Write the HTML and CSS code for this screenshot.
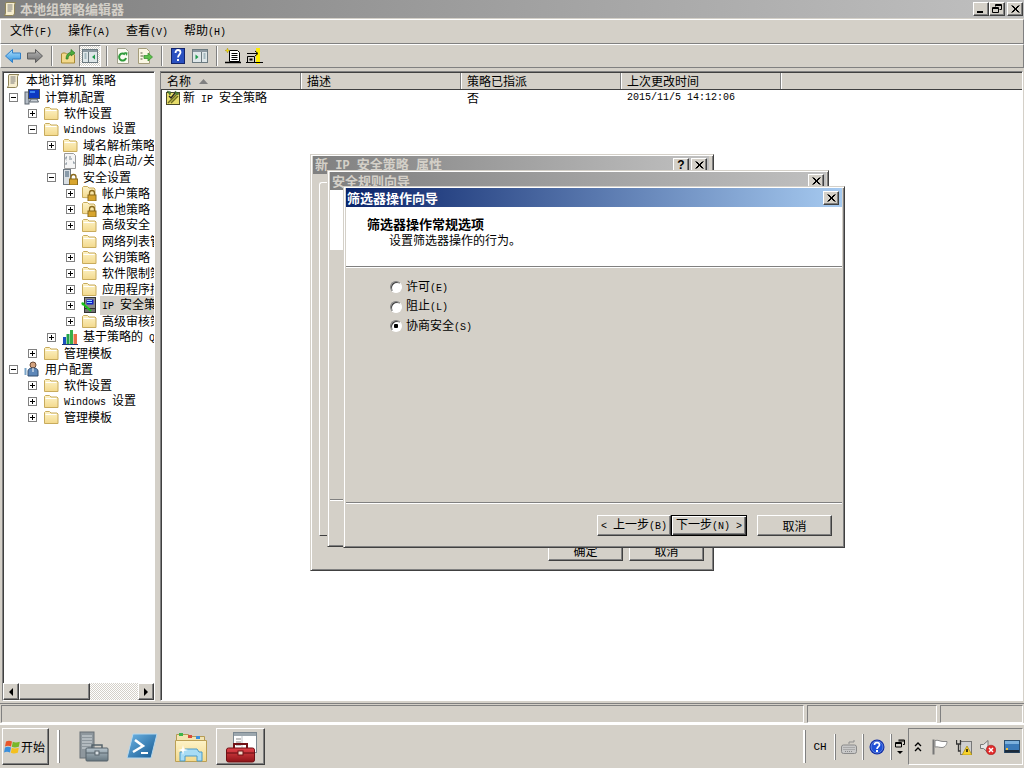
FILE: index.html
```html
<!DOCTYPE html>
<html lang="zh-CN">
<head>
<meta charset="utf-8">
<title>本地组策略编辑器</title>
<link rel="stylesheet" href="styles.css">
</head>
<body>
<svg class="defs" xmlns="http://www.w3.org/2000/svg">
  <defs>
    <linearGradient id="gBlue" x1="0" y1="0" x2="0" y2="1"><stop offset="0" stop-color="#b5e2fb"/><stop offset="1" stop-color="#2a90e0"/></linearGradient>
    <linearGradient id="gGray" x1="0" y1="0" x2="0" y2="1"><stop offset="0" stop-color="#b8b8b8"/><stop offset="1" stop-color="#6e6e6e"/></linearGradient>
    <linearGradient id="gFold" x1="0" y1="0" x2="0" y2="1"><stop offset="0" stop-color="#fdf3c8"/><stop offset="1" stop-color="#f3d98c"/></linearGradient>
    <linearGradient id="gPs" x1="0" y1="0" x2="1" y2="1"><stop offset="0" stop-color="#6fb6e6"/><stop offset="1" stop-color="#14578f"/></linearGradient>
    <linearGradient id="gRed" x1="0" y1="0" x2="0" y2="1"><stop offset="0" stop-color="#e2434a"/><stop offset="1" stop-color="#8e1418"/></linearGradient>
    <linearGradient id="gSteel" x1="0" y1="0" x2="0" y2="1"><stop offset="0" stop-color="#b7c4cc"/><stop offset="1" stop-color="#66767f"/></linearGradient>
    <symbol id="folder" viewBox="0 0 16 16"><path d="M1.5 14.5V3.5l1-1h4l1.500 1.500h6l1 1v9.500z" fill="url(#gFold)" stroke="#c8ab5c"/><path d="M2.500 5.500h11" stroke="#fff" fill="none"/></symbol>
    <symbol id="lockfolder" viewBox="0 0 16 16"><path d="M1.500 12.500V2.500l1-1h4l1.500 1.500h5l1 1v9z" fill="url(#gFold)" stroke="#c8ab5c"/><path d="M8.500 10V8a2.500 2.500 0 0 1 5 0v2" fill="none" stroke="#8a6a1d" stroke-width="1.300"/><rect x="7" y="10" width="8" height="6" fill="#d8a52e" stroke="#8a6a1d"/></symbol>
    <symbol id="lock-server" viewBox="0 0 16 16"><rect x="1.500" y="0.500" width="7" height="15" fill="#d9dfe4" stroke="#6d7780"/><path d="M3 3h4M3 5h4M3 7h4" stroke="#39566e"/><path d="M9 10V8a2.500 2.500 0 0 1 5 0v2" fill="none" stroke="#8a6a1d" stroke-width="1.300"/><rect x="7.500" y="10" width="8" height="6" fill="#d8a52e" stroke="#8a6a1d"/></symbol>
    <symbol id="script" viewBox="0 0 16 16"><path d="M2.500.5h9l2 2v13h-11z" fill="#f5f5f5" stroke="#9a9a9a"/><path d="M5 4H4v2H3.500M4.500 7H4M7 4h2M7 6h3M5 10H4v2M11 9h1v2" stroke="#7b8894" fill="none"/></symbol>
    <symbol id="scroll" viewBox="0 0 16 16"><path d="M4 1.500h10c-1 .5-1.500 1.500-1.500 2.500v8c0 1.500-1 2.500-2 2.500H2c1-.5 1.500-1.500 1.500-2.500V3z" fill="#f6edcf" stroke="#8f8459"/><path d="M5.500 4h5M5.500 6h5M5.500 8h5M5.500 10h4" stroke="#7d7d7d"/></symbol>
    <symbol id="computer" viewBox="0 0 16 16"><rect x="1" y="3" width="4" height="12" fill="#b5bdc6" stroke="#5d6670"/><rect x="4.500" y="0.500" width="11" height="9" fill="#0d39c2" stroke="#4a5058"/><path d="M6 2h5v2H6z" fill="#3f86f0"/><path d="M7 10h6l1.500 3h-9z" fill="#c8ced4" stroke="#5d6670"/></symbol>
    <symbol id="user" viewBox="0 0 16 16"><circle cx="9" cy="4" r="3" fill="#d3a27e" stroke="#6a4a34"/><path d="M4 15V10c0-2 2-3 5-3s5 1 5 3v5z" fill="#5d87b8" stroke="#334e70"/><path d="M1.500 7v7" stroke="#7ba5c8" stroke-width="2"/><path d="M9 7v4" stroke="#fff"/></symbol>
    <symbol id="ipsec" viewBox="0 0 16 16"><rect x="3.500" y="0.500" width="11" height="11" fill="#8a8a8a" stroke="#333"/><rect x="5.500" y="2.500" width="7" height="5" fill="#1020c8"/><path d="M6 3.500h5M6 5.500h5" stroke="#8fd0ff"/><rect x="3.500" y="11.500" width="11" height="4" fill="#707070" stroke="#333"/><path d="M1 6l9 8" stroke="#18c418" stroke-width="2"/><path d="M0.500 5.500l3.500.2-3 3z" fill="#18c418"/></symbol>
    <symbol id="qos" viewBox="0 0 16 16"><rect x="1" y="8" width="3" height="7" fill="#1c4fc0"/><rect x="4.500" y="5" width="3" height="10" fill="#22a34a"/><rect x="8" y="1" width="3" height="14" fill="#36b04a"/><rect x="11.500" y="5" width="3.500" height="10" fill="#e87148"/><path d="M0 15.500h16" stroke="#1e3a7a"/></symbol>
    <symbol id="policy" viewBox="0 0 16 16"><rect x="1.500" y="2.500" width="13" height="12" fill="#e7dd6b" stroke="#4a4a2a"/><path d="M3 13l8-8M6 13l7-7" stroke="#6c6c20" stroke-width="1.500"/><path d="M2 1l4 1-1 3zM10 1l4 3-3 1z" fill="#4d8b3a" stroke="#2b4a20" stroke-width=".5"/><path d="M4 6l2 2 4-5" fill="none" stroke="#222" stroke-width="1.300"/></symbol>
    <symbol id="xmark" viewBox="0 0 9 8"><path d="M0.500 0.500l7 7M1.500 0.500l7 7M7.500 0.500l-7 7M8.500 0.500l-7 7" stroke="#000" fill="none"/></symbol>
    <symbol id="restorewin" viewBox="0 0 10 9"><path d="M3.500 2.500V.5h6v5H7.500M.5 3.500h6v5h-6z" fill="none" stroke="#000"/><path d="M3 1.500h7M0 4.500h7" stroke="#000"/></symbol>
    <symbol id="back" viewBox="0 0 16 16"><path d="M.5 8L7.500 1.500V5h8v6h-8v3.500z" fill="url(#gBlue)" stroke="#2f7fc8"/></symbol>
    <symbol id="forward" viewBox="0 0 16 16"><path d="M15.500 8L8.500 1.500V5h-8v6h8v3.500z" fill="url(#gGray)" stroke="#5c5c5c"/></symbol>
    <symbol id="upfolder" viewBox="0 0 16 16"><path d="M1.500 15V6l1-1h3l1 1h7l1 1v8z" fill="#f3d98c" stroke="#a98a33"/><path d="M6 11C6 7 8 5 11 4V1.500l4 3.500-4 3V6C9 7 8 9 8 11z" fill="#4cae3c" stroke="#2d7a25" stroke-width=".7"/></symbol>
    <symbol id="panel-left" viewBox="0 0 16 16"><rect x=".5" y="1.500" width="15" height="13" fill="#dfe7e9" stroke="#6c7a80"/><path d="M1 2h14v2H1z" fill="#8b98a0"/><path d="M6.500 4v10" stroke="#6c7a80"/><path d="M2.500 6h2M2.500 8h2M2.500 10h2" stroke="#6a8c96"/><path d="M13 6.500v5l-3-2.500z" fill="#1d9a4a"/></symbol>
    <symbol id="panel-right" viewBox="0 0 16 16"><rect x=".5" y="1.500" width="15" height="13" fill="#dfe7e9" stroke="#6c7a80"/><path d="M1 2h14v2H1z" fill="#8b98a0"/><path d="M9.500 4v10" stroke="#6c7a80"/><path d="M11.500 6h2M11.500 8h2M11.500 10h2" stroke="#6a8c96"/><path d="M3.500 6.500v5l3-2.500z" fill="#1d9a4a"/></symbol>
    <symbol id="refresh" viewBox="0 0 16 16"><path d="M2.500.5h8l3 3v12h-11z" fill="#fbfbf2" stroke="#a1a18c"/><path d="M11 10a3.500 3.500 0 1 1-1-3.500" fill="none" stroke="#2f9b3a" stroke-width="2"/><path d="M9 4l3.500.5-.5 3.500z" fill="#2f9b3a"/></symbol>
    <symbol id="export" viewBox="0 0 16 16"><path d="M1.500.5h8l3 3v12h-11z" fill="#fbf7e4" stroke="#a59d7a"/><path d="M3.500 5h2M3.500 8h3M3.500 11h2" stroke="#5b5b40"/><path d="M7 7.500h4V5l4.500 4-4.500 4v-2.500H7z" fill="#5cc04a" stroke="#2f8a2a" stroke-width=".7"/></symbol>
    <symbol id="help" viewBox="0 0 14 16"><rect x=".5" y=".5" width="13" height="15" fill="#2a50c0" stroke="#14246a"/><path d="M4.500 5c0-2 1-3 2.500-3s2.500 1 2.500 2.500S7 7 7 9.500" fill="none" stroke="#fff" stroke-width="1.800"/><rect x="6" y="11" width="2" height="2" fill="#fff"/></symbol>
    <symbol id="newdoc" viewBox="0 0 18 16"><path d="M5.500 2.500h8l2 2v9h-10z" fill="#fff" stroke="#000"/><path d="M7.500 5.500h6M7.500 7.500h6M7.500 9.500h6M7.500 11.500h6" stroke="#000"/><path d="M1 14.500h16" stroke="#000" stroke-width="1.500"/><path d="M3.500 0l.6 2 1.900.5-1.900.6L3.500 5l-.6-1.900L1 2.500 2.900 2z" fill="#ffe400" stroke="#a08a00" stroke-width=".4"/></symbol>
    <symbol id="assign" viewBox="0 0 18 16"><rect x="10" y="0" width="4" height="16" fill="#ffee00"/><path d="M1 5.500h10M9 3l3 2.500L9 8M1.500 14.500v-6h7v6z" fill="none" stroke="#000"/><rect x="3.500" y="10.500" width="3" height="2" fill="#000"/><path d="M0 14.500h17" stroke="#000"/></symbol>
    <symbol id="keyboard" viewBox="0 0 16 16"><path d="M8 5V3h5V1" fill="none" stroke="#8f8f8f"/><rect x=".5" y="6" width="15" height="8.500" rx="2" fill="#c8c8c8" stroke="#8a8a8a"/><path d="M2.500 8.500h11M2.500 10.500h11M4 12.500h8" stroke="#8a8a8a" stroke-dasharray="1 1"/></symbol>
    <symbol id="hlp" viewBox="0 0 16 16"><circle cx="8" cy="8" r="7.500" fill="#0e2aa4"/><circle cx="8" cy="8" r="6" fill="#1e50d8" stroke="#8fb0f0" stroke-width=".6"/><path d="M5.500 6c0-1.500 1-2.300 2.500-2.300S10.500 4.500 10.500 6 8 8 8 10" fill="none" stroke="#fff" stroke-width="1.700"/><rect x="7" y="11" width="2" height="2" fill="#fff"/></symbol>
    <symbol id="restoreup" viewBox="0 0 10 16"><path d="M3.500 1h6v4.500h-1.500M.5 3.500h6v4.500H.5z" fill="none" stroke="#000"/><path d="M3.500 2h6M.5 4.500h6" stroke="#000"/><path d="M2 12h6l-3 3z" fill="#000"/></symbol>
    <symbol id="chev" viewBox="0 0 8 10"><path d="M1 4l3-3 3 3M1 9l3-3 3 3" fill="none" stroke="#000" stroke-width="1.300"/></symbol>
    <symbol id="flag" viewBox="0 0 16 16"><path d="M1.500 15.500V.5" stroke="#777" stroke-width="2"/><path d="M3 1.500c3-1 5 1 8 1h4c0 3-2 6-5 6-3 0-4-1-7-.5z" fill="#fff" stroke="#888"/></symbol>
    <symbol id="netwarn" viewBox="0 0 16 16"><rect x="4.500" y="2.500" width="11" height="13" fill="#cfcfcf" stroke="#777"/><path d="M.5 1v4h4V1M2.500 5v7h2" fill="none" stroke="#333" stroke-width="1.300"/><path d="M11 7l5 9H6z" fill="#f8d22a" stroke="#a58a10" stroke-width=".7"/><path d="M11 10v3" stroke="#000" stroke-width="1.400"/></symbol>
    <symbol id="speaker" viewBox="0 0 16 16"><path d="M.5 5.500h3L8 1.500v12l-4.500-4h-3z" fill="#e6e6e6" stroke="#777"/><circle cx="11" cy="11" r="4.800" fill="#e22a2a" stroke="#8e1212" stroke-width=".5"/><path d="M9 9l4 4M13 9l-4 4" stroke="#fff" stroke-width="1.500"/></symbol>
    <symbol id="monitor" viewBox="0 0 16 16"><rect x=".5" y="1.500" width="15" height="12" fill="#3c7bb8" stroke="#2b4f70"/><path d="M1 2h14v3H1z" fill="#7db1dc"/><rect x="1" y="11" width="14" height="2.500" fill="#1b2a3a"/><rect x="2" y="9" width="2" height="2" fill="#f0c040"/></symbol>
    <symbol id="flag-win" viewBox="0 0 16 16"><path d="M2 2.500c2-1 4-1 6 0L7 7.500C5 6.500 3 6.500 1 7.500z" fill="#e8562a"/><path d="M8.800 2.800c2 1 4 1 7 0l-1 5c-3 1-5 1-7 0z" fill="#78b82a"/><path d="M1 8.500c2-1 4-1 6 0l-1 5c-2-1-4-1-6 0z" fill="#3a8fdc"/><path d="M7.800 8.800c2 1 4 1 7 0l-1 5c-3 1-5 1-7 0z" fill="#f4c020"/></symbol>
    <symbol id="t-server" viewBox="0 0 32 32"><rect x="3" y="1" width="14" height="26" fill="#8e979d" stroke="#687076"/><path d="M5 5h10M5 8h10M5 11h10M5 14h10M5 17h6" stroke="#d7dde0"/><rect x="9" y="17" width="22" height="13" rx="1" fill="url(#gSteel)" stroke="#56636b"/><path d="M15 17v-3h10v3" fill="none" stroke="#56636b" stroke-width="1.500"/><path d="M9 22h22" stroke="#56636b"/><rect x="18" y="20" width="4" height="4" fill="#d8dee2" stroke="#56636b"/></symbol>
    <symbol id="t-ps" viewBox="0 0 32 32"><path d="M7 3h24l-6 24H1z" fill="url(#gPs)" stroke="#b6d8ee"/><path d="M9 9l8 6-10 6" fill="none" stroke="#fff" stroke-width="2.500"/><path d="M15 22h7" stroke="#fff" stroke-width="2"/></symbol>
    <symbol id="t-folder" viewBox="0 0 32 32"><path d="M1.500 3.500h12l2 2h14v5h-28z" fill="#f2e4b2" stroke="#b59b55"/><rect x="4" y="2" width="4" height="3" fill="#3db54a"/><rect x="13" y="4" width="4" height="3" fill="#d84a3a"/><rect x="21" y="5" width="4" height="3" fill="#3a8fdc"/><path d="M.5 9.500h31v21H.5z" fill="url(#gFold)" stroke="#bca055"/><path d="M5 30v-9h3l2-3h12l2 3h3v9h-5v-5H10v5z" fill="#a8dcf4" stroke="#4a9ac8"/><path d="M8 14l1 4 4 1-4 1-1 4-1-4-4-1 4-1z" fill="#fff"/></symbol>
    <symbol id="t-tools" viewBox="0 0 32 32"><rect x="8.500" y="1.500" width="23" height="20" fill="#fff" stroke="#7b8790"/><path d="M9 2h22v3H9z" fill="#9ca7ae"/><path d="M11 8h5M11 11h5M11 14h5" stroke="#8a8a8a"/><path d="M17 5v12" stroke="#c0c6ca"/><rect x="1.500" y="17" width="28" height="14" rx="2" fill="url(#gRed)" stroke="#701015"/><path d="M9 17v-4h13v4" fill="none" stroke="#701015" stroke-width="2"/><path d="M2 22h27" stroke="#5d0d10"/><rect x="13" y="20" width="5" height="4" fill="#f4d9c8" stroke="#701015"/></symbol>
  </defs>
</svg>

<div class="app">
  <header class="titlebar">
    <svg class="i16"><use href="#scroll"/></svg>
    <span class="title-text">本地组策略编辑器</span>
    <span class="cap-btns">
      <span class="cap"><i class="glyph-min"></i></span>
      <span class="cap"><svg class="rw"><use href="#restorewin"/></svg></span>
      <span class="cap gap-left"><svg class="xm"><use href="#xmark"/></svg></span>
    </span>
  </header>

  <nav class="bar menu">
    <span class="menu-item">文件<span class="l">(F)</span></span>
    <span class="menu-item">操作<span class="l">(A)</span></span>
    <span class="menu-item">查看<span class="l">(V)</span></span>
    <span class="menu-item">帮助<span class="l">(H)</span></span>
  </nav>

  <div class="bar toolbar">
    <span class="tool"><svg class="i16"><use href="#back"/></svg></span>
    <span class="tool"><svg class="i16"><use href="#forward"/></svg></span>
    <span class="tsep"></span>
    <span class="tool"><svg class="i16"><use href="#upfolder"/></svg></span>
    <span class="tool pressed"><svg class="i16"><use href="#panel-left"/></svg></span>
    <span class="tsep"></span>
    <span class="tool"><svg class="i16"><use href="#refresh"/></svg></span>
    <span class="tool"><svg class="i16"><use href="#export"/></svg></span>
    <span class="tsep"></span>
    <span class="tool"><svg class="i16"><use href="#help"/></svg></span>
    <span class="tool"><svg class="i16"><use href="#panel-right"/></svg></span>
    <span class="tsep"></span>
    <span class="tool"><svg class="i18"><use href="#newdoc"/></svg></span>
    <span class="tool"><svg class="i18"><use href="#assign"/></svg></span>
  </div>

  <main class="panes">
    <section class="pane tree-pane">
      <div class="tree">
        <div class="row lv0"><svg class="i16"><use href="#scroll"/></svg><span class="lbl root">本地计算机<span class="l"> </span>策略</span></div>
        <div class="row lv1"><span class="box"></span><svg class="i16"><use href="#computer"/></svg><span class="lbl">计算机配置</span></div>
        <div class="row lv2"><span class="box plus"></span><svg class="i16"><use href="#folder"/></svg><span class="lbl">软件设置</span></div>
        <div class="row lv2"><span class="box"></span><svg class="i16"><use href="#folder"/></svg><span class="lbl"><span class="l">Windows </span>设置</span></div>
        <div class="row lv3"><span class="box plus"></span><svg class="i16"><use href="#folder"/></svg><span class="lbl">域名解析策略</span></div>
        <div class="row lv3"><span class="box none"></span><svg class="i16"><use href="#script"/></svg><span class="lbl">脚本<span class="l">(</span>启动<span class="l">/</span>关机<span class="l">)</span></span></div>
        <div class="row lv3"><span class="box"></span><svg class="i16"><use href="#lock-server"/></svg><span class="lbl">安全设置</span></div>
        <div class="row lv4"><span class="box plus"></span><svg class="i16"><use href="#lockfolder"/></svg><span class="lbl">帐户策略</span></div>
        <div class="row lv4"><span class="box plus"></span><svg class="i16"><use href="#lockfolder"/></svg><span class="lbl">本地策略</span></div>
        <div class="row lv4"><span class="box plus"></span><svg class="i16"><use href="#folder"/></svg><span class="lbl">高级安全<span class="l"> Windows </span>防火墙</span></div>
        <div class="row lv4"><span class="box none"></span><svg class="i16"><use href="#folder"/></svg><span class="lbl">网络列表管理器策略</span></div>
        <div class="row lv4"><span class="box plus"></span><svg class="i16"><use href="#folder"/></svg><span class="lbl">公钥策略</span></div>
        <div class="row lv4"><span class="box plus"></span><svg class="i16"><use href="#folder"/></svg><span class="lbl">软件限制策略</span></div>
        <div class="row lv4"><span class="box plus"></span><svg class="i16"><use href="#folder"/></svg><span class="lbl">应用程序控制策略</span></div>
        <div class="row lv4"><span class="box plus"></span><svg class="i16"><use href="#ipsec"/></svg><span class="lbl sel"><span class="l">IP </span>安全策略</span></div>
        <div class="row lv4"><span class="box plus"></span><svg class="i16"><use href="#folder"/></svg><span class="lbl">高级审核策略配置</span></div>
        <div class="row lv3"><span class="box plus"></span><svg class="i16"><use href="#qos"/></svg><span class="lbl">基于策略的<span class="l"> QoS</span></span></div>
        <div class="row lv2"><span class="box plus"></span><svg class="i16"><use href="#folder"/></svg><span class="lbl">管理模板</span></div>
        <div class="row lv1"><span class="box"></span><svg class="i16"><use href="#user"/></svg><span class="lbl">用户配置</span></div>
        <div class="row lv2"><span class="box plus"></span><svg class="i16"><use href="#folder"/></svg><span class="lbl">软件设置</span></div>
        <div class="row lv2"><span class="box plus"></span><svg class="i16"><use href="#folder"/></svg><span class="lbl"><span class="l">Windows </span>设置</span></div>
        <div class="row lv2"><span class="box plus"></span><svg class="i16"><use href="#folder"/></svg><span class="lbl">管理模板</span></div>
      </div>
      <div class="hscroll">
        <span class="sb-btn"><i class="arr-left"></i></span>
        <span class="sb-thumb"></span>
        <span class="sb-track"></span>
        <span class="sb-btn"><i class="arr-right"></i></span>
      </div>
    </section>
    <section class="pane list-pane">
      <div class="list-head">
        <span class="col c1">名称<svg class="sort" viewBox="0 0 9 5"><path d="M0 5L4.500 0 9 5z" fill="#808080"/></svg></span>
        <span class="col c2">描述</span>
        <span class="col c2">策略已指派</span>
        <span class="col c2">上次更改时间</span>
        <span class="col c5"></span>
      </div>
      <div class="list-row">
        <span class="cell c1 first"><svg class="i16"><use href="#policy"/></svg><span class="cell-name">新<span class="l"> IP </span>安全策略</span></span>
        <span class="cell c2"></span>
        <span class="cell c2">否</span>
        <span class="cell c2 l">2015/11/5 14:12:06</span>
      </div>
    </section>
  </main>

  <div class="status">
    <span class="sec s1"></span>
    <span class="sec s2"></span>
    <span class="sec s3"></span>
  </div>

  <footer class="taskbar">
    <button class="start"><svg class="i16"><use href="#flag-win"/></svg>开始</button>
    <span class="qsep"></span>
    <span class="task"><svg class="i32"><use href="#t-server"/></svg></span>
    <span class="task"><svg class="i32"><use href="#t-ps"/></svg></span>
    <span class="task"><svg class="i32"><use href="#t-folder"/></svg></span>
    <span class="task active"><svg class="i32"><use href="#t-tools"/></svg></span>
    <div class="task-right">
      <span class="qsep"></span>
      <span class="lang w28 l">CH</span>
      <span class="lsep"></span>
      <span class="lang w26"><svg class="i16"><use href="#keyboard"/></svg></span>
      <span class="lsep"></span>
      <span class="lang w26"><svg class="i16"><use href="#hlp"/></svg></span>
      <span class="lsep"></span>
      <span class="lang w16"><svg class="i10"><use href="#restoreup"/></svg></span>
      <div class="tray">
        <svg class="chev"><use href="#chev"/></svg>
        <svg class="i16"><use href="#flag"/></svg>
        <svg class="i16"><use href="#netwarn"/></svg>
        <svg class="i16"><use href="#speaker"/></svg>
        <svg class="i16"><use href="#monitor"/></svg>
      </div>
    </div>
  </footer>
</div>

<div class="win d1">
  <div class="cap-bar inactive">
    <span class="cap-title">新<span class="lb"> IP </span>安全策略<span class="lb"> </span>属性</span>
    <span class="cap"><b class="q">?</b></span>
    <span class="cap gap-left"><svg class="xm"><use href="#xmark"/></svg></span>
  </div>
  <div class="tabframe"></div>
  <div class="d1-btns">
    <span class="btn w75">确定</span>
    <span class="btn w75">取消</span>
  </div>
</div>

<div class="win d2">
  <div class="cap-bar inactive">
    <span class="cap-title">安全规则向导</span>
    <span class="cap"><svg class="xm"><use href="#xmark"/></svg></span>
  </div>
  <div class="d2-head"></div>
  <div class="grow"></div>
  <div class="sep"></div>
  <div class="d2-foot"></div>
</div>

<div class="win d3">
  <div class="cap-bar active-cap">
    <span class="cap-title">筛选器操作向导</span>
    <span class="cap"><svg class="xm"><use href="#xmark"/></svg></span>
  </div>
  <div class="wiz-head">
    <div class="wiz-h1">筛选器操作常规选项</div>
    <div class="wiz-h2">设置筛选器操作的行为。</div>
  </div>
  <div class="sep"></div>
  <div class="options">
    <label class="opt"><i class="radio"></i><span>许可<span class="l">(E)</span></span></label>
    <label class="opt"><i class="radio"></i><span>阻止<span class="l">(L)</span></span></label>
    <label class="opt"><i class="radio on"></i><span>协商安全<span class="l">(S)</span></span></label>
  </div>
  <div class="sep"></div>
  <div class="wiz-btns">
    <span class="btn w74"><span><span class="l">&lt; </span>上一步<span class="l">(B)</span></span></span>
    <span class="btn w76 default"><span>下一步<span class="l">(N) &gt;</span></span></span>
    <span class="btn w75 last">取消</span>
  </div>
</div>
</body>
</html>
```

FILE: styles.css
```css
* { box-sizing: border-box; }
html, body { margin: 0; padding: 0; }
body {
  width: 1024px;
  height: 768px;
  overflow: hidden;
  position: relative;
  background: #d4d0c8;
  color: #000;
  font: 12px/16px "Noto Sans CJK SC", "Liberation Sans", sans-serif;
}
.defs { position: absolute; width: 0; height: 0; }
.l { font-family: "Liberation Mono", monospace; font-size: 10px; white-space: pre; }
.lb { font-family: "Liberation Mono", monospace; font-size: 12px; white-space: pre; }
.i16 { width: 16px; height: 16px; flex: none; display: block; }
.i18 { width: 18px; height: 16px; flex: none; display: block; }
.i10 { width: 10px; height: 16px; flex: none; display: block; }
.i32 { width: 32px; height: 32px; flex: none; display: block; }
.xm { width: 9px; height: 8px; display: block; }
.rw { width: 10px; height: 9px; display: block; }

.app { display: flex; flex-direction: column; height: 768px; }

/* Title bar */
.titlebar {
  height: 19px;
  flex: none;
  display: flex;
  align-items: center;
  padding: 0 1px 1px 2px;
  background: linear-gradient(90deg, #808080, #c0c0c0);
  border-bottom: 1px solid #d4d0c8;
}
.title-text { margin-left: 2px; font-size: 13px; font-weight: 700; color: #d4d0c8; }
.cap-btns { margin-left: auto; display: flex; }
.cap {
  width: 16px;
  height: 14px;
  flex: none;
  display: flex;
  align-items: center;
  justify-content: center;
  background: #d4d0c8;
  border: 1px solid;
  border-color: #fff #404040 #404040 #fff;
  box-shadow: inset -1px -1px 0 #808080;
}
.gap-left { margin-left: 2px; }
.glyph-min { width: 6px; height: 2px; background: #000; margin-top: 7px; margin-right: 3px; }

/* Bars */
.bar {
  flex: none;
  display: flex;
  align-items: center;
  background: #d4d0c8;
  border: 1px solid;
  border-color: #fff #808080 #808080 #fff;
}
.menu { height: 25px; padding-left: 9px; }
.menu-item { width: 58px; }
.toolbar { height: 24px; padding-left: 1px; }
.tool { width: 22px; height: 22px; flex: none; display: flex; align-items: center; justify-content: center; }
.pressed {
  border: 1px solid;
  border-color: #808080 #fff #fff #808080;
  background: repeating-conic-gradient(#fff 0 25%, #d4d0c8 0 50%) 0 0 / 2px 2px;
}
.tsep { width: 2px; height: 20px; margin: 0 4px 0 5px; flex: none; background: linear-gradient(90deg, #808080 50%, #fff 50%); }

/* Panes */
.panes { flex: 1; min-height: 0; display: flex; padding: 3px 1px 2px 2px; border-bottom: 1px solid #808080; gap: 5px; }
.pane {
  background: #fff;
  border: 1px solid;
  border-color: #808080 #fff #fff #808080;
  box-shadow: inset 1px 1px 0 #404040;
  display: flex;
  flex-direction: column;
  min-height: 0;
}
.tree-pane { width: 153px; flex: none; }
.list-pane { flex: 1; min-width: 0; padding-top: 1px; }
.tree { flex: 1; min-height: 0; overflow: hidden; padding-top: 1px; }
.row { height: 16px; display: flex; align-items: center; white-space: nowrap; }
.lv0 { padding-left: 2px; }
.lv1 { padding-left: 6px; }
.lv2 { padding-left: 25px; }
.lv3 { padding-left: 44px; }
.lv4 { padding-left: 63px; }
.box {
  width: 9px;
  height: 9px;
  margin-right: 6px;
  flex: none;
  border: 1px solid #808080;
  background: linear-gradient(#000, #000) center / 5px 1px no-repeat, #fff;
}
.plus { background: linear-gradient(#000, #000) center / 5px 1px no-repeat, linear-gradient(#000, #000) center / 1px 5px no-repeat, #fff; }
.none { visibility: hidden; }
.lbl { margin-left: 5px; }
.sel { background: #d4d0c8; margin-left: 3px; padding: 0 2px; flex: 1; }

.hscroll { height: 17px; flex: none; display: flex; background: repeating-conic-gradient(#fff 0 25%, #d4d0c8 0 50%) 0 0 / 2px 2px; }
.sb-btn, .sb-thumb {
  height: 17px;
  display: flex;
  align-items: center;
  justify-content: center;
  background: #d4d0c8;
  border: 1px solid;
  border-color: #fff #404040 #404040 #fff;
  box-shadow: inset -1px -1px 0 #808080;
}
.sb-btn { width: 16px; flex: none; }
.sb-thumb { width: 71px; flex: none; }
.sb-track { flex: 1; }
.arr-left { width: 0; height: 0; border: 4px solid transparent; border-left: 0; border-right-color: #000; }
.arr-right { width: 0; height: 0; border: 4px solid transparent; border-right: 0; border-left-color: #000; }

.list-head { height: 16px; flex: none; display: flex; background: #d4d0c8; border-bottom: 1px solid #404040; box-sizing: content-box; }
.col { border-right: 1px solid #808080; box-shadow: 1px 0 0 #fff; padding-left: 6px; display: flex; align-items: center; }
.c1 { width: 140px; flex: none; }
.c2 { width: 160px; flex: none; }
.c5 { flex: 1; border-right: 0; box-shadow: none; }
.sort { width: 9px; height: 5px; margin-left: 8px; }
.list-row { height: 16px; display: flex; }
.cell { padding-left: 6px; display: flex; align-items: center; white-space: pre; }
.first { padding-left: 4px; }
.cell-name { margin-left: 2px; }

/* Status */
.status { height: 19px; flex: none; display: flex; gap: 3px; padding: 1px 1px 0 1px; }
.sec { border: 1px solid; border-color: #808080 #fff #fff #808080; display: block; }
.s1 { width: 803px; }
.s2 { width: 130px; }
.s3 { flex: 1; }

/* Taskbar */
.taskbar { height: 45px; flex: none; display: flex; align-items: center; padding: 0 1px 0 2px; border-top: 2px solid #fff; }
.start {
  width: 47px;
  height: 37px;
  padding: 0 0 0 1px;
  display: flex;
  align-items: center;
  gap: 1px;
  background: #d4d0c8;
  border: 1px solid;
  border-color: #fff #404040 #404040 #fff;
  box-shadow: inset -1px -1px 0 #808080;
  font: inherit;
  color: #000;
}
.qsep { width: 3px; height: 33px; flex: none; margin: 0 8px 0 8px; background: #fff; border-right: 1px solid #808080; }
.task { width: 49px; height: 37px; flex: none; display: flex; align-items: center; justify-content: center; }
.active {
  margin-left: 1px;
  border: 1px solid;
  border-color: #fff #404040 #404040 #fff;
  box-shadow: inset -1px -1px 0 #808080;
}
.task-right { margin-left: auto; display: flex; align-items: center; }
.task-right .qsep { margin: 0; }
.lang { height: 30px; flex: none; display: flex; align-items: center; justify-content: center; }
.w28 { width: 28px; font-size: 11px; }
.w26 { width: 26px; }
.w16 { width: 16px; }
.lsep { width: 2px; height: 26px; flex: none; background: #fff; border-right: 1px solid #808080; }
.tray {
  width: 115px;
  height: 37px;
  display: flex;
  align-items: center;
  gap: 8px;
  padding-left: 5px;
  border: 1px solid;
  border-color: #808080 #fff #fff #808080;
}
.chev { width: 8px; height: 10px; margin-right: 2px; }

/* Dialog windows (free canvas) */
.win {
  position: absolute;
  background: #d4d0c8;
  border: 1px solid;
  border-color: #d4d0c8 #404040 #404040 #d4d0c8;
  box-shadow: inset 1px 1px 0 #fff, inset -1px -1px 0 #808080;
  padding: 1px 2px 2px;
  display: flex;
  flex-direction: column;
}
.d1 { left: 310px; top: 154px; width: 404px; height: 417px; padding-right: 4px; }
.d2 { left: 327px; top: 170px; width: 502px; height: 377px; }
.d3 { left: 343px; top: 186px; width: 502px; height: 362px; }
.cap-bar { height: 18px; flex: none; display: flex; align-items: center; padding: 0 2px; }
.cap-title { margin-right: auto; font-size: 13px; font-weight: 700; white-space: pre; }
.inactive { background: linear-gradient(90deg, #808080, #c0c0c0); color: #d4d0c8; }
.active-cap { height: 19px; background: linear-gradient(90deg, #0a246a, #a6caf0); color: #fff; padding: 0 3px 0 1px; }
.q { font: 700 12px/12px "Liberation Sans", sans-serif; color: #000; }
.tabframe {
  flex: 1;
  margin: 8px 7px 4px 6px;
  border: 1px solid;
  border-color: #fff #808080 #404040 #fff;
  border-top-left-radius: 3px;
}
.d1-btns { height: 21px; flex: none; display: flex; justify-content: flex-end; gap: 6px; margin: 0 5px 7px 0; }
.btn {
  height: 21px;
  flex: none;
  display: flex;
  align-items: center;
  justify-content: center;
  white-space: pre;
  background: #d4d0c8;
  border: 1px solid;
  border-color: #fff #404040 #404040 #fff;
  box-shadow: inset -1px -1px 0 #808080;
}
.w74 { width: 74px; }
.w75 { width: 75px; }
.w76 { width: 76px; }
.default { border-color: #000; box-shadow: inset 1px 1px 0 #fff, inset -1px -1px 0 #404040, inset -2px -2px 0 #808080; }
.last { margin-left: 10px; }
.d2-head { height: 60px; flex: none; background: #fff; }
.grow { flex: 1; }
.sep { height: 2px; flex: none; background: linear-gradient(#808080 50%, #fff 50%); }
.d2-foot { height: 43px; flex: none; }
.wiz-head { height: 59px; flex: none; background: #fff; padding: 9px 0 0 21px; }
.wiz-h1 { font-size: 13px; font-weight: 700; height: 16px; }
.wiz-h2 { padding-left: 22px; height: 16px; }
.options { flex: 1; display: flex; flex-direction: column; gap: 3.5px; padding: 11px 0 0 44px; }
.opt { height: 16px; display: flex; align-items: center; white-space: pre; }
.radio {
  width: 12px;
  height: 12px;
  margin-right: 4px;
  flex: none;
  border-radius: 50%;
  border: 1px solid;
  border-color: #808080 #fff #fff #808080;
  background: #fff;
  box-shadow: inset 1px 1px 0 #404040;
}
.on { background: radial-gradient(circle, #000 0 2px, #fff 2.500px); }
.wiz-btns { height: 41px; flex: none; display: flex; justify-content: flex-end; align-items: flex-start; padding: 11px 10px 0 0; }
```
